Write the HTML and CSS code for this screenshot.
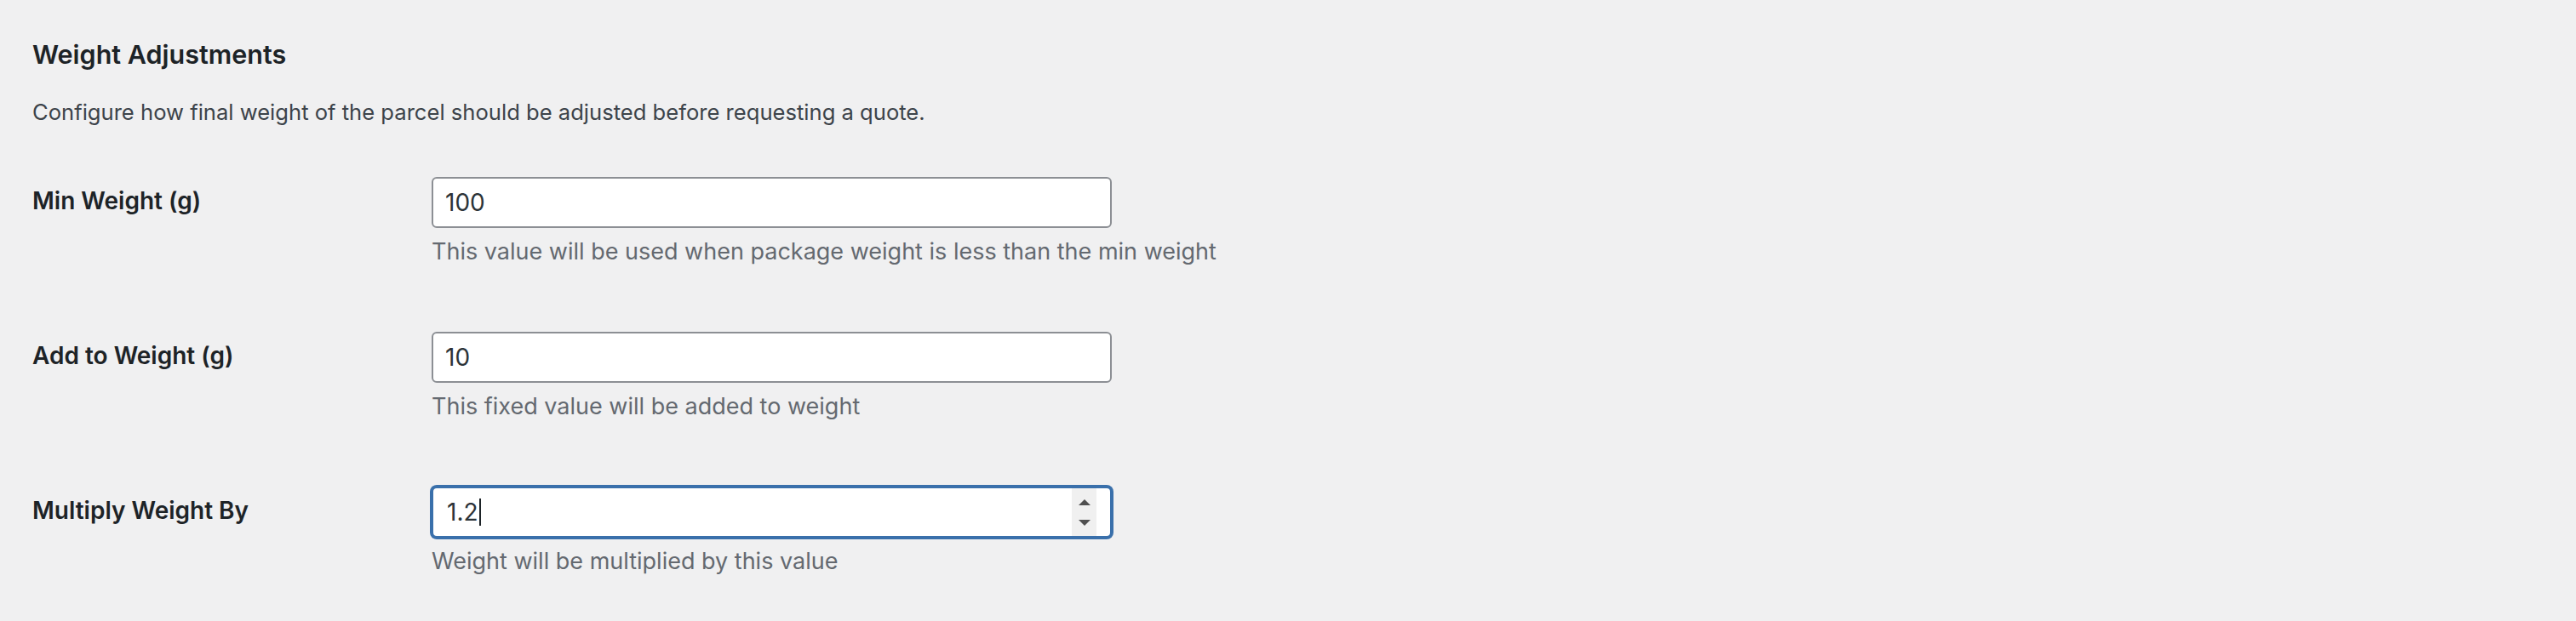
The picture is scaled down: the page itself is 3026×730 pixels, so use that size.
FILE: index.html
```html
<!DOCTYPE html>
<html lang="en">
<head>
<meta charset="utf-8">
<title>Weight Adjustments</title>
<link rel="stylesheet" href="styles.css">
</head>
<body>
<main class="settings">
  <h2 class="section-title">Weight Adjustments</h2>
  <p class="section-desc">Configure how final weight of the parcel should be adjusted before requesting a quote.</p>
  <div class="form-rows">
    <div class="form-row">
      <label class="row-label" for="min-weight">Min Weight (g)</label>
      <div class="row-field">
        <div class="field" id="min-weight"><span class="field-value">100</span></div>
        <p class="help">This value will be used when package weight is less than the min weight</p>
      </div>
    </div>
    <div class="form-row">
      <label class="row-label" for="add-weight">Add to Weight (g)</label>
      <div class="row-field">
        <div class="field" id="add-weight"><span class="field-value">10</span></div>
        <p class="help">This fixed value will be added to weight</p>
      </div>
    </div>
    <div class="form-row">
      <label class="row-label" for="mult-weight">Multiply Weight By</label>
      <div class="row-field">
        <div class="field field-focused" id="mult-weight">
          <span class="field-value">1.2</span><span class="caret"></span>
          <span class="spinner">
            <span class="tri tri-up"></span>
            <span class="tri tri-down"></span>
          </span>
        </div>
        <p class="help">Weight will be multiplied by this value</p>
      </div>
    </div>
  </div>
</main>
</body>
</html>
```
FILE: styles.css
```css
html, body {
  margin: 0;
  padding: 0;
  background: #f0f0f1;
}
body {
  font-family: "Inter", "Noto Sans", sans-serif;
  color: #1d2327;
}
.settings {
  padding: 44px 0 0 38px;
}
.section-title {
  margin: 0;
  font-size: 30.5px;
  line-height: 39px;
  font-weight: 600;
  color: #1d2327;
}
.section-desc {
  margin: 31px 0 0;
  font-size: 25.6px;
  line-height: 36px;
  color: #3c434a;
}
.form-rows {
  margin-top: 28px;
}
.form-row {
  display: grid;
  grid-template-columns: 469px 1fr;
  padding: 30px 0 46px;
}
.row-label {
  padding-top: 8px;
  font-size: 28px;
  line-height: 40px;
  font-weight: 600;
  color: #1d2327;
}
.row-field {
  display: flex;
  flex-direction: column;
  align-items: flex-start;
}
.field {
  box-sizing: border-box;
  width: 799px;
  height: 60px;
  display: flex;
  align-items: center;
  padding: 0 16px 0 14px;
  background: #fff;
  border: 2px solid #8c8f94;
  border-radius: 6px;
  font-size: 28px;
  line-height: 56px;
  color: #2c3338;
}
.field-focused {
  border-color: #3a70ab;
  box-shadow: 0 0 0 2px #3a70ab;
  padding-left: 16px;
}
.caret {
  width: 2px;
  height: 32px;
  background: #1d2327;
  margin-left: 1px;
}
.spinner {
  margin-left: auto;
  align-self: stretch;
  width: 29px;
  background: #f0f0f0;
  display: flex;
  flex-direction: column;
  align-items: center;
  justify-content: center;
  gap: 17px;
}
.tri {
  width: 0;
  height: 0;
  border-left: 7px solid transparent;
  border-right: 7px solid transparent;
}
.tri-up {
  border-bottom: 7px solid #505050;
}
.tri-down {
  border-top: 7px solid #505050;
}
.help {
  margin: 10px 0 0;
  font-size: 27px;
  line-height: 36px;
  color: #646970;
}
```
